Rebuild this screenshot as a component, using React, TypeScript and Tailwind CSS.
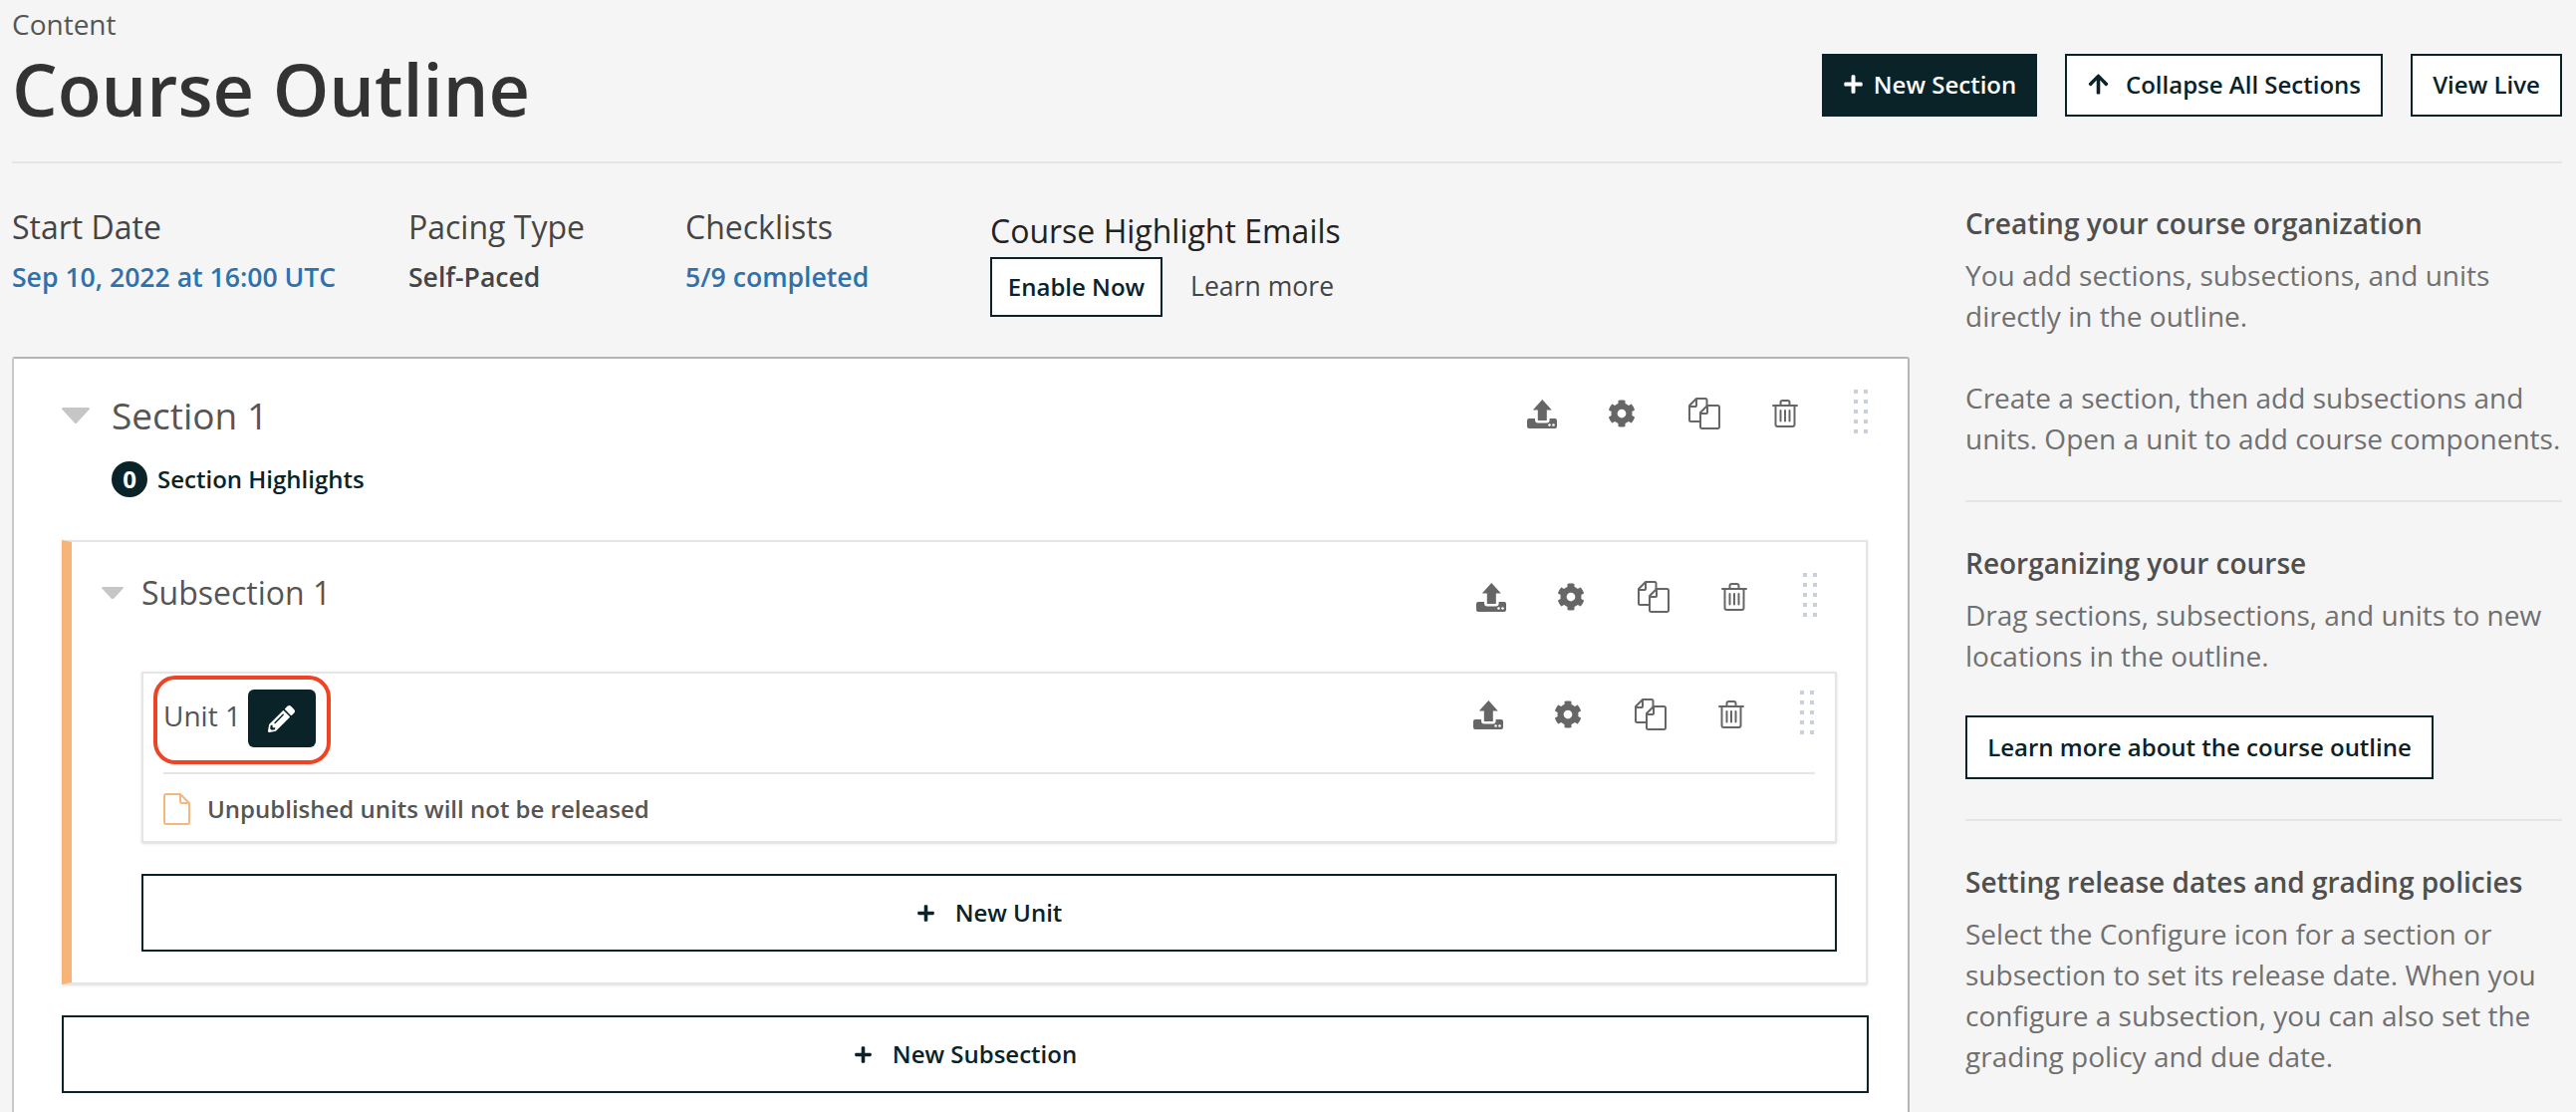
import { FaArrowUp, FaCog, FaPencilAlt, FaPlus } from 'react-icons/fa';

const UploadIcon = () => (
  <svg width="30" height="29" viewBox="0 0 30 29" fill="#666">
    <path d="M15.3 0 L24.8 10.5 H19.8 V21 H10.8 V10.5 H5.8 Z" />
    <path d="M0 21 a2 2 0 0 1 2-2 H8 v1.5 a3 3 0 0 0 3 3 h8.6 a3 3 0 0 0 3-3 v-1.5 h5.4 a2 2 0 0 1 2 2 v6 a2 2 0 0 1-2 2 H2 a2 2 0 0 1-2-2 z" />
    <circle cx="22.5" cy="25.5" r="1.3" fill="#fff" />
    <circle cx="26.5" cy="25.5" r="1.3" fill="#fff" />
  </svg>
);

const CopyIcon = () => (
  <svg width="32" height="32" viewBox="0 0 32 32" fill="none" stroke="#666" strokeWidth="2" strokeLinejoin="round">
    <path d="M12 24 H2.5 a1.5 1.5 0 0 1-1.5-1.5 V8 L8 1 H17 a1.5 1.5 0 0 1 1.5 1.5 V8" />
    <path d="M1 9 H7 a1 1 0 0 0 1-1 V1.5" />
    <path d="M19 8 H29.5 a1.5 1.5 0 0 1 1.5 1.5 V29.5 a1.5 1.5 0 0 1-1.5 1.5 H13.5 a1.5 1.5 0 0 1-1.5-1.5 V15 Z" />
    <path d="M12.5 16 H18 a1 1 0 0 0 1-1 V8.5" />
  </svg>
);

const TrashIcon = () => (
  <svg width="26" height="28" viewBox="0 0 26 28" fill="none" stroke="#666" strokeWidth="2" strokeLinecap="round" strokeLinejoin="round">
    <path d="M1 6 H25" />
    <path d="M8.5 5.5 V3 a2 2 0 0 1 2-2 h5 a2 2 0 0 1 2 2 V5.5" />
    <path d="M3.5 6 V25 a2 2 0 0 0 2 2 h15 a2 2 0 0 0 2-2 V6" />
    <path d="M8.5 11 V21.5 M13 11 V21.5 M17.5 11 V21.5" />
  </svg>
);

const DocIcon = () => (
  <svg width="27" height="32" viewBox="0 0 27 32" fill="none" stroke="#f7b67c" strokeWidth="2" strokeLinejoin="round">
    <path d="M17 1 H3 a2 2 0 0 0-2 2 V29 a2 2 0 0 0 2 2 H24 a2 2 0 0 0 2-2 V10 Z" />
    <path d="M17 1 V8 a2 2 0 0 0 2 2 H26" />
  </svg>
);

const Caret = ({ w }: { w: number }) => (
  <svg width={w} height={w * 0.58} viewBox="0 0 24 14" fill="#c6c6c6" className="shrink-0">
    <path d="M1 0 H23 a1 1 0 0 1 .7 1.7 L12.7 13.6 a1 1 0 0 1-1.4 0 L.3 1.7 A1 1 0 0 1 1 0 Z" />
  </svg>
);

const DragHandle = () => (
  <div className="grid grid-cols-2 gap-x-[6px] gap-y-[6px] w-[14px] ml-[31px]">
    {Array.from({ length: 10 }).map((_, i) => (
      <span key={i} className="w-[4px] h-[4px] bg-[#c9d0d9]" />
    ))}
  </div>
);

function Actions() {
  return (
    <div className="flex items-start shrink-0">
      <div className="flex items-center h-[44px] pt-[4px]">
        <span className="w-[80px] flex justify-center"><UploadIcon /></span>
        <span className="w-[80px] flex justify-center"><FaCog size={28} color="#666" /></span>
        <span className="w-[86px] flex justify-center"><CopyIcon /></span>
        <span className="w-[76px] flex justify-center"><TrashIcon /></span>
      </div>
      <DragHandle />
    </div>
  );
}

function OutlineButton({ label, className }: { label: string; className: string }) {
  return (
    <button className={`flex items-center justify-center gap-[20px] border-2 border-[#0a2329] bg-white text-[24px] font-semibold text-[#0a2329] ${className}`}>
      <FaPlus size={19} />
      {label}
    </button>
  );
}

function SideBlock({ title, children, className }: { title: string; children: React.ReactNode; className: string }) {
  return (
    <div className={className}>
      <h3 className="text-[28px] leading-[41px] font-semibold text-[#4f4f4f] mb-[11px]">{title}</h3>
      {children}
    </div>
  );
}

export default function App() {
  return (
    <div className="h-[1116px] overflow-hidden bg-[#f5f5f5] pl-[12px] pr-[14px] font-['Open_Sans',sans-serif] text-[#454545]">
      {/* page header */}
      <header className="flex justify-between h-[164px] border-b-2 border-[#e5e5e5]">
        <div className="pt-[7px]">
          <div className="text-[28px] leading-[34px] text-[#555]">Content</div>
          <h1 className="text-[72px] leading-[90px] mt-[3px] font-semibold text-[#333]">Course Outline</h1>
        </div>
        <div className="flex gap-[28px] pt-[54px] items-start text-[24px] font-semibold">
          <button className="h-[63px] w-[216px] pb-[2px] flex items-center justify-center gap-[10px] bg-[#0a2329] text-white">
            <FaPlus size={21} />
            New Section
          </button>
          <button className="h-[63px] w-[319px] pb-[2px] flex items-center justify-center gap-[16px] border-2 border-[#0a2329] bg-white text-[#0a2329]">
            <FaArrowUp size={23} />
            Collapse All Sections
          </button>
          <button className="h-[63px] w-[152px] pb-[2px] border-2 border-[#0a2329] bg-white text-[#0a2329]">View Live</button>
        </div>
      </header>

      <div className="flex gap-[56px]">
        <main className="w-[1905px] shrink-0">
          {/* course stats */}
          <div className="flex h-[194px] pt-[42px]">
            <div className="w-[398px]">
              <div className="text-[32px] leading-[44px]">Start Date</div>
              <div className="text-[26.6px] leading-[40px] mt-[8px] font-semibold text-[#2d71ad]">Sep 10, 2022 at 16:00 UTC</div>
            </div>
            <div className="w-[278px]">
              <div className="text-[32px] leading-[44px]">Pacing Type</div>
              <div className="text-[26.6px] leading-[40px] mt-[8px] font-semibold">Self-Paced</div>
            </div>
            <div className="w-[306px]">
              <div className="text-[32px] leading-[44px]">Checklists</div>
              <div className="text-[26.6px] leading-[40px] mt-[8px] font-semibold text-[#2d71ad]">5/9 completed</div>
            </div>
            <div className="mt-[1px]">
              <div className="text-[32px] leading-[50px] text-[#222]">Course Highlight Emails</div>
              <div className="flex items-center mt-[1px]">
                <button className="w-[173px] h-[60px] border-2 border-[#0a2329] bg-white text-[24px] font-semibold text-[#0a2329]">Enable Now</button>
                <a className="ml-[28px] text-[26.6px] text-[#454545]">Learn more</a>
              </div>
            </div>
          </div>

          {/* section card */}
          <section className="bg-white border-2 border-[#b5b5b5] border-l-[#c8c8c8] rounded-[3px] pl-[48px] pr-[40px] h-[900px]">
            <div className="flex justify-between items-start pt-[31px] h-[182px]">
              <div>
                <div className="flex items-center gap-[22px] h-[52px]">
                  <Caret w={28} />
                  <h2 className="text-[37px] leading-[48px] text-[#555]">Section 1</h2>
                </div>
                <div className="flex items-center gap-[10px] ml-[50px] mt-[20px]">
                  <span className="w-[36px] h-[36px] rounded-full bg-[#0a2329] text-white text-[24px] font-bold flex items-center justify-center">0</span>
                  <span className="text-[24px] font-semibold text-[#0a2329]">Section Highlights</span>
                </div>
              </div>
              <Actions />
            </div>

            {/* subsection */}
            <div className="bg-white border-2 border-l-[10px] border-[#e5e5e5] border-l-[#f6b478] shadow-sm h-[446px] pr-[29px]">
              <div className="flex justify-between items-start h-[130px] pt-[31px] pr-[20px]">
                <div className="flex items-center gap-[18px] pl-[30px] -mt-[2px]">
                  <Caret w={22} />
                  <h3 className="text-[32px] leading-[44px] text-[#555]">Subsection 1</h3>
                </div>
                <Actions />
              </div>

              {/* unit */}
              <div className="ml-[70px] bg-white border-2 border-[#e5e5e5] shadow-sm h-[172px]">
                <div className="flex justify-between items-start pt-[2px] pl-[10px] pr-[20px]">
                  <div className="flex items-center border-4 border-[#ee4324] rounded-[22px] pl-[6px] pr-[11px] pt-[10px] pb-[13px]">
                    <span className="text-[28px] leading-[38px] -mt-[6px] text-[#555]">Unit 1</span>
                    <span className="ml-[7px] w-[68px] h-[58px] rounded-[6px] bg-[#0a2329] flex items-center justify-center">
                      <FaPencilAlt size={27} color="#fff" />
                    </span>
                  </div>
                  <div className="pt-[15px] -translate-x-[1px]">
                    <Actions />
                  </div>
                </div>
                <div className="mx-[20px] mt-[8px] border-t-2 border-[#e5e5e5] flex items-center gap-[17px] pt-[17px]">
                  <DocIcon />
                  <span className="text-[24px] font-semibold text-[#555]">Unpublished units will not be released</span>
                </div>
              </div>

              <OutlineButton label="New Unit" className="ml-[70px] mt-[31px] w-[1702px] h-[78px]" />
            </div>

            <OutlineButton label="New Subsection" className="mt-[31px] w-[1814px] h-[78px]" />
          </section>
        </main>

        {/* help sidebar */}
        <aside className="w-[599px] shrink-0 text-[28px] leading-[41px] text-[#707070]">
          <SideBlock title="Creating your course organization" className="pt-[40px] pb-[41px] border-b-2 border-[#e5e5e5]">
            <p>You add sections, subsections, and units directly in the outline.</p>
            <p className="mt-[41px]">Create a section, then add subsections and units. Open a unit to add course components.</p>
          </SideBlock>
          <SideBlock title="Reorganizing your course" className="pt-[41px] pb-[40px] border-b-2 border-[#e5e5e5]">
            <p>Drag sections, subsections, and units to new locations in the outline.</p>
            <button className="mt-[39px] w-[470px] h-[64px] border-2 border-[#0a2329] bg-white text-[24px] leading-[30px] font-semibold text-[#0a2329]">Learn more about the course outline</button>
          </SideBlock>
          <SideBlock title="Setting release dates and grading policies" className="pt-[41px]">
            <p>Select the Configure icon for a section or subsection to set its release date. When you configure a subsection, you can also set the grading policy and due date.</p>
          </SideBlock>
        </aside>
      </div>
    </div>
  );
}
